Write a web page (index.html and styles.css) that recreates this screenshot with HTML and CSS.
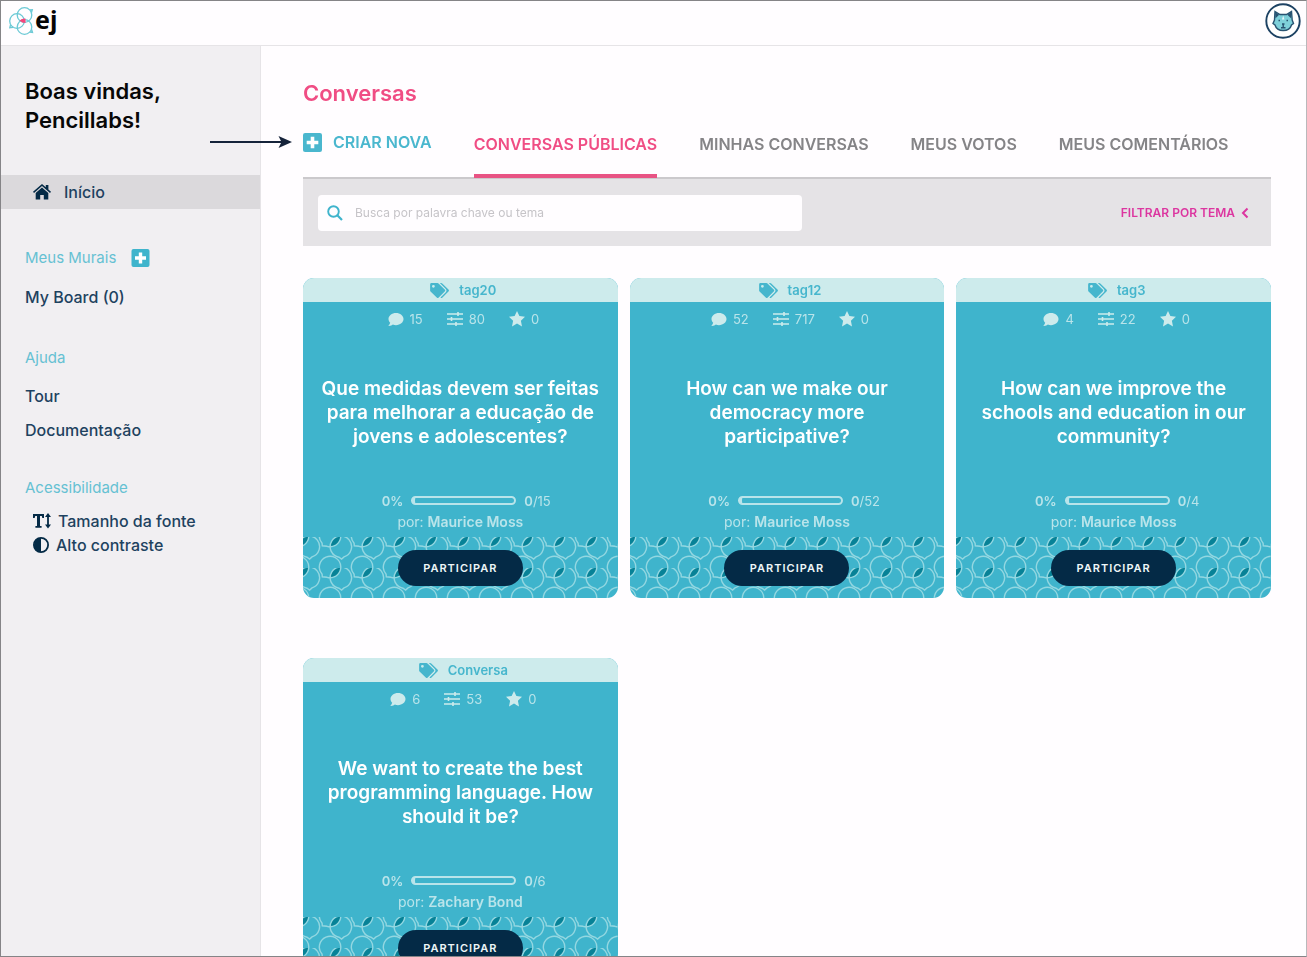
FILE: index.html
```html
<!DOCTYPE html>
<html lang="pt-br">
<head>
<meta charset="utf-8">
<title>Conversas</title>
<link rel="stylesheet" href="styles.css">
</head>
<body>
<svg class="sprite" aria-hidden="true">
  <defs>
    <pattern id="bubbles" width="32" height="31" patternUnits="userSpaceOnUse">
      <path class="leaf" d="M-5 9.7A10.7 10.7 0 0 1 5.7-1 10.7 10.7 0 0 1-5 9.7zM27 9.7A10.7 10.7 0 0 1 37.7-1 10.7 10.7 0 0 1 27 9.7z"/>
      <g class="rings">
        <path id="ring-a" d="M-12.900 6.200A10.7 10.7 0 1 1-8 9.300L-12.700 8.800z"/>
        <use href="#ring-a" x="32"/>
        <use href="#ring-a" y="31"/>
        <use href="#ring-a" x="32" y="31"/>
        <path id="ring-b" d="M4 20.2A10.7 10.7 0 1 1 9 19.9L6.6 22z"/>
        <use href="#ring-b" x="32"/>
      </g>
    </pattern>
    <symbol id="plus" viewBox="0 0 18 18"><rect width="18" height="18" rx="2" fill="currentColor"/><path d="M7.3 3.5h3.4v3.8h3.8v3.4h-3.8v3.8H7.3v-3.8H3.5V7.3h3.8z" fill="#fff"/></symbol>
    <symbol id="tags" viewBox="0 0 640 512"><path fill="currentColor" d="M497.9 225.9L286 14A48 48 0 0 0 252.100 0H48A48 48 0 0 0 0 48v204.100a48 48 0 0 0 14 33.900l211.900 212a48 48 0 0 0 67.900 0l204.100-204.100a48 48 0 0 0 0-68zM112 160a48 48 0 1 1 0-96 48 48 0 0 1 0 96zm513.900 133.800L421.800 498a48 48 0 0 1-67.900 0l-.4-.4L527.600 323.500a90 90 0 0 0 0-127.300L331.400 0H380a48 48 0 0 1 33.900 14l212 211.900a48 48 0 0 1 0 67.900z"/></symbol>
    <symbol id="comment" viewBox="0 0 512 512"><path fill="currentColor" d="M256 32C114.600 32 0 125.100 0 240c0 49.600 21.400 95 57 130.700C44.500 421.100 2.700 466 2.200 466.500c-2.200 2.300-2.800 5.700-1.500 8.700S4.800 480 8 480c66.300 0 116-31.800 140.600-51.400 32.700 12.300 69 19.400 107.400 19.400 141.400 0 256-93.100 256-208S397.400 32 256 32z"/></symbol>
    <symbol id="sliders" viewBox="0 0 16 14"><path stroke="currentColor" stroke-width="1.6" fill="none" d="M0 2h16M0 7h16M0 12h16M11 0v4M4.500 5v4M9 10v4"/></symbol>
    <symbol id="star" viewBox="0 0 16 16"><path fill="currentColor" d="M8 0l2.400 5.100 5.600.7-4.100 3.900 1.100 5.700L8 12.600l-5 2.800 1.100-5.700L0 5.800l5.600-.7z"/></symbol>
  </defs>
</svg>
<div class="app">
  <header class="topbar">
    <a class="logo" href="#" aria-label="ej">
      <svg width="26" height="30" viewBox="0 0 26 30" aria-hidden="true">
        <g fill="none" stroke="#6cc9d5" stroke-width="1.300">
          <circle cx="8" cy="15" r="7.300"/>
          <circle cx="15.500" cy="9" r="7.300"/>
          <circle cx="15.500" cy="21" r="7.300"/>
          <path d="M21 4l2.300-.2-.8 2.700M1.500 19l-.7 2.700 3.200-.3M21 26l2.500.5-.9-3"/>
        </g>
        <path d="M10.500 14.500q3-2.500 6-2v4.500q-3.500 0-6-2.500z" fill="#f7467d"/>
      </svg>
      <span>ej</span>
    </a>
    <button class="avatar" aria-label="Perfil">
      <svg width="36" height="36" viewBox="0 0 36 36" aria-hidden="true">
        <circle cx="18" cy="18" r="16.700" fill="#fff" stroke="#1d4263" stroke-width="1.900"/>
        <path d="M10 8.500l5 3h6.500l5-3 .7 8.500 1.300 3.500-2 1.500c-1 3.500-4.300 5.500-8.300 5.500s-7.200-2-8.200-5.500l-2-1.500 1.500-3.500z" fill="#7ed0da" stroke="#285371" stroke-width="1.400"/>
        <path d="M10 9l4.200 2.700-3.700 3.500zM26.500 9l-4.200 2.700 3.700 3.500z" fill="#285371"/>
        <path d="M18.200 12.500l1.200 4h-2.400z" fill="#e8f8fa"/>
        <path d="M13.500 17.500h1.500M21.500 17.500h1.500M17 21h2.500M18.200 21v3.500M16 24.800h4.500" stroke="#285371" stroke-width="1.400"/>
      </svg>
    </button>
  </header>
  <div class="body">
    <nav class="sidebar">
      <h2 class="welcome">Boas vindas,<br>Pencillabs!</h2>
      <a class="home" href="#">
        <svg width="18" height="16" viewBox="0 0 18 16" aria-hidden="true"><path d="M9 0l3.800 3.200V1h2.600v4.400L18 7.700l-1 1.200-8-6.800-8 6.800-1-1.200z" fill="#042a46"/><path d="M9 3.600l6.300 5.300V15.500h-4.500V11H7.200v4.500H2.700V8.900z" fill="#042a46"/></svg>
        Início
      </a>
      <section class="group boards">
        <h3>Meus Murais <button class="add" aria-label="Criar mural"><svg width="19" height="18" aria-hidden="true"><use href="#plus"/></svg></button></h3>
        <a href="#">My Board (0)</a>
      </section>
      <section class="group help">
        <h3>Ajuda</h3>
        <a href="#">Tour</a>
        <a href="#">Documentação</a>
      </section>
      <section class="group access">
        <h3>Acessibilidade</h3>
        <button class="tool"><svg width="18" height="16" viewBox="0 0 18 16" aria-hidden="true"><path d="M0 1h11v4H9.300L8.800 3H7v10h1.600v1.700H2.400V13H4V3H2.200L1.700 5H0z" fill="#042a46"/><path d="M15 0l3 4h-2.100v7.500H18l-3 4-3-4h2.100V4H12z" fill="#042a46"/></svg>Tamanho da fonte</button>
        <button class="tool"><svg width="16" height="16" viewBox="0 0 16 16" aria-hidden="true"><circle cx="8" cy="8" r="7.100" fill="none" stroke="#042a46" stroke-width="1.800"/><path d="M8 1a7 7 0 0 0 0 14z" fill="#042a46"/></svg>Alto contraste</button>
      </section>
    </nav>
    <main class="content">
      <h1>Conversas</h1>
      <div class="tabs">
        <a class="create" href="#">
          <svg class="pointer" width="82" height="12" viewBox="0 0 82 12" aria-hidden="true"><path d="M0 6h72" stroke="#15233a" stroke-width="2"/><path d="M68.500 0L82 6l-13.500 6 3-6z" fill="#15233a"/></svg>
          <svg width="19" height="19" aria-hidden="true"><use href="#plus"/></svg>CRIAR NOVA
        </a>
        <a class="tab active" href="#">CONVERSAS PÚBLICAS</a>
        <a class="tab" href="#">MINHAS CONVERSAS</a>
        <a class="tab" href="#">MEUS VOTOS</a>
        <a class="tab" href="#">MEUS COMENTÁRIOS</a>
      </div>
      <div class="filters">
        <label class="search">
          <svg width="16" height="16" viewBox="0 0 16 16" aria-hidden="true"><circle cx="6.500" cy="6.500" r="5.300" fill="none" stroke="#3fb4cc" stroke-width="1.900"/><path d="M10.300 10.300l4.700 4.700" stroke="#3fb4cc" stroke-width="2.200"/></svg>
          <input type="text" placeholder="Busca por palavra chave ou tema" aria-label="Busca">
        </label>
        <button class="topic">FILTRAR POR TEMA <svg width="8" height="12" viewBox="0 0 8 12" aria-hidden="true"><path d="M6.500 1.500L2 6l4.500 4.500" fill="none" stroke="currentColor" stroke-width="2"/></svg></button>
      </div>
      <div class="cards">
        <article class="card">
          <div class="tag"><svg width="19" height="15"><use href="#tags"/></svg>tag20</div>
          <div class="stats"><span><svg width="16" height="15"><use href="#comment"/></svg>15</span><span><svg width="16" height="14"><use href="#sliders"/></svg>80</span><span><svg width="16" height="16"><use href="#star"/></svg>0</span></div>
          <h2>Que medidas devem ser feitas para melhorar a educação de jovens e adolescentes?</h2>
          <div class="votes"><b>0%</b><progress value="0" max="15" aria-label="Votos"></progress><span><b>0</b>/15</span></div>
          <p class="author">por: <b>Maurice Moss</b></p>
          <div class="foot"><svg class="pattern" aria-hidden="true"><rect width="100%" height="100%" fill="url(#bubbles)"/></svg><button>PARTICIPAR</button></div>
        </article>
        <article class="card">
          <div class="tag"><svg width="19" height="15"><use href="#tags"/></svg>tag12</div>
          <div class="stats"><span><svg width="16" height="15"><use href="#comment"/></svg>52</span><span><svg width="16" height="14"><use href="#sliders"/></svg>717</span><span><svg width="16" height="16"><use href="#star"/></svg>0</span></div>
          <h2>How can we make our democracy more participative?</h2>
          <div class="votes"><b>0%</b><progress value="0" max="52" aria-label="Votos"></progress><span><b>0</b>/52</span></div>
          <p class="author">por: <b>Maurice Moss</b></p>
          <div class="foot"><svg class="pattern" aria-hidden="true"><rect width="100%" height="100%" fill="url(#bubbles)"/></svg><button>PARTICIPAR</button></div>
        </article>
        <article class="card">
          <div class="tag"><svg width="19" height="15"><use href="#tags"/></svg>tag3</div>
          <div class="stats"><span><svg width="16" height="15"><use href="#comment"/></svg>4</span><span><svg width="16" height="14"><use href="#sliders"/></svg>22</span><span><svg width="16" height="16"><use href="#star"/></svg>0</span></div>
          <h2>How can we improve the schools and education in our community?</h2>
          <div class="votes"><b>0%</b><progress value="0" max="4" aria-label="Votos"></progress><span><b>0</b>/4</span></div>
          <p class="author">por: <b>Maurice Moss</b></p>
          <div class="foot"><svg class="pattern" aria-hidden="true"><rect width="100%" height="100%" fill="url(#bubbles)"/></svg><button>PARTICIPAR</button></div>
        </article>
        <article class="card">
          <div class="tag"><svg width="19" height="15"><use href="#tags"/></svg>Conversa</div>
          <div class="stats"><span><svg width="16" height="15"><use href="#comment"/></svg>6</span><span><svg width="16" height="14"><use href="#sliders"/></svg>53</span><span><svg width="16" height="16"><use href="#star"/></svg>0</span></div>
          <h2>We want to create the best programming language. How should it be?</h2>
          <div class="votes"><b>0%</b><progress value="0" max="6" aria-label="Votos"></progress><span><b>0</b>/6</span></div>
          <p class="author">por: <b>Zachary Bond</b></p>
          <div class="foot"><svg class="pattern" aria-hidden="true"><rect width="100%" height="100%" fill="url(#bubbles)"/></svg><button>PARTICIPAR</button></div>
        </article>
      </div>
    </main>
  </div>
</div>
</body>
</html>
```
FILE: styles.css
```css
* { box-sizing: border-box; margin: 0; padding: 0; }
body { font-family: Inter, "Liberation Sans", sans-serif; font-size: 16px; color: #1e4260; background: #fffdff; }
a { color: inherit; text-decoration: none; }
button { font: inherit; color: inherit; background: none; border: 0; cursor: pointer; }
svg { flex: none; }
.sprite { position: absolute; width: 0; height: 0; }
.leaf { fill: #078297; }
.rings { fill: none; stroke: #93d7e1; stroke-width: 1.4; }

.app { display: flex; flex-direction: column; height: 100vh; border: 1px solid #858487; border-right-color: #b9b8bb; overflow: hidden; }
.topbar { display: flex; flex: none; justify-content: space-between; align-items: center; height: 45px; padding: 0 5px 4px 8px; border-bottom: 1px solid #e6e4e7; }
.logo { display: flex; align-items: center; color: #050505; font: bold 25px/28px "Noto Sans", sans-serif; }
.logo span { padding-bottom: 4px; }
.avatar { display: flex; }
.body { display: flex; flex: 1; min-height: 0; overflow-y: auto; scrollbar-width: none; }

.sidebar { position: sticky; top: 0; flex: none; width: 260px; background: #f1eff2; border-right: 1px solid #e6e4e7; font-weight: 500; }
.welcome { padding: 31px 24px 0; color: #070707; font-size: 22px; line-height: 29px; font-weight: 600; }
.home { display: flex; align-items: center; gap: 13px; height: 34px; margin-top: 40px; padding-left: 32px; background: #dbd9dc; }
.group { display: flex; flex-direction: column; align-items: flex-start; padding-left: 24px; }
.group h3 { display: flex; align-items: center; gap: 15px; font-size: 15px; line-height: 20px; font-weight: 400; color: #66c1d3; }
.group a { line-height: 20px; }
.add { display: flex; color: #3fb4cc; }
.boards { gap: 19px; margin-top: 39px; }
.help { gap: 14px; margin-top: 41px; }
.help h3 { margin-bottom: 4px; }
.access { margin-top: 38px; }
.access h3 { margin-bottom: 11px; }
.tool { display: flex; align-items: center; gap: 7px; height: 24px; padding-left: 8px; font-weight: 500; }

.content { position: relative; z-index: 1; flex: 1; min-width: 0; padding: 32px 35px 60px 42px; }
h1 { color: #f04d84; font-size: 22px; line-height: 30px; font-weight: 600; }
.tabs { display: flex; gap: 42px; height: 71px; border-bottom: 2px solid #cbc9cc; font-weight: 600; white-space: nowrap; }
.create { position: relative; display: flex; align-items: center; gap: 11px; height: 68px; color: #4ab7ce; }
.pointer { position: absolute; right: 100%; margin-right: 11px; }
.tab { height: 70px; padding-top: 4px; border-bottom: 4px solid transparent; line-height: 64px; color: #858487; }
.tab.active { color: #f04d84; border-color: #e85384; }
.filters { display: flex; align-items: center; justify-content: space-between; height: 67px; padding: 0 22px 0 15px; background: #e5e3e6; }
.search { display: flex; align-items: center; gap: 12px; width: 52%; height: 36px; padding: 0 9px; background: #fffdff; border-radius: 4px; }
.search input { flex: 1; min-width: 0; border: 0; outline: 0; background: none; font: 12px Inter, sans-serif; }
.search input::placeholder { color: #c6c4c8; }
.topic { display: flex; align-items: center; gap: 6px; color: #dc36a0; font-size: 12px; font-weight: 600; }

.cards { display: grid; grid-template-columns: repeat(3, 1fr); gap: 60px 12px; margin-top: 32px; }
.card { display: flex; flex-direction: column; min-height: 320px; overflow: hidden; border-radius: 11px; background: #3fb4cc; color: #b9e4ea; font-size: 13px; }
.tag { display: flex; align-items: center; justify-content: center; gap: 10px; height: 24px; padding-left: 6px; background: #cdebec; color: #46b6cd; font-weight: 600; }
.stats { display: flex; justify-content: center; gap: 24px; height: 34px; padding-left: 6px; }
.stats span { display: flex; align-items: center; gap: 6px; }
.stats svg { color: #cdebec; }
.card h2 { display: flex; flex: 1; align-items: center; justify-content: center; padding: 0 17px; color: #fff; font-size: 19px; line-height: 24px; font-weight: 600; text-align: center; }
.votes { display: flex; align-items: center; gap: 8px; height: 21px; padding-left: 25%; }
.card b { font-weight: 600; }
progress { appearance: none; width: 105px; height: 9px; border: 2px solid #b9e4ea; border-left-width: 4px; border-radius: 5px; background: none; }
progress::-webkit-progress-bar { background: transparent; }
.author { height: 26px; font-size: 14px; line-height: 22px; text-align: center; }
.foot { position: relative; display: flex; align-items: flex-start; justify-content: center; height: 61px; padding-top: 13px; }
.pattern { position: absolute; inset: 0; width: 100%; height: 100%; }
.foot button { position: relative; width: 125px; height: 36px; border-radius: 18px; background: #042a46; color: #eef6f8; font-size: 11px; font-weight: 600; letter-spacing: 1px; }
```
